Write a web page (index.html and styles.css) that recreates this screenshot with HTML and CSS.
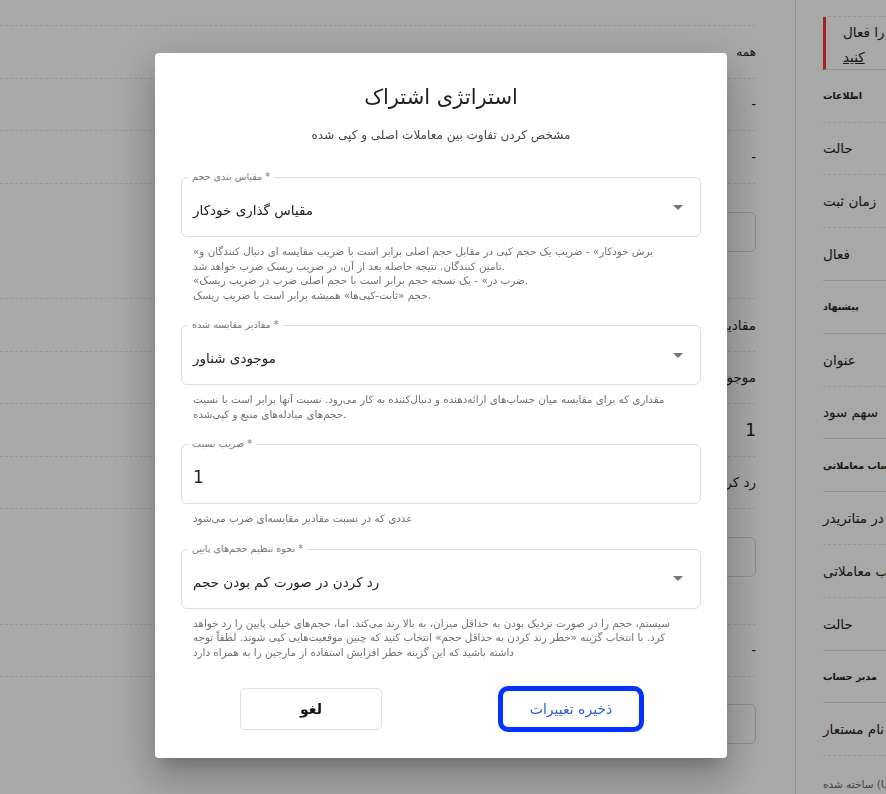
FILE: index.html
```html
<!DOCTYPE html>
<html lang="fa">
<head>
<meta charset="utf-8">
<title>استراتژی اشتراک</title>
<link rel="stylesheet" href="styles.css">
</head>
<body>
<div class="page">
  <main class="content">
    <div class="row row-top"></div>
    <div class="row"><span class="cell small">همه</span></div>
    <div class="row"><span class="cell">-</span></div>
    <div class="row"><span class="cell">-</span></div>
    <div class="row row-tall"><div class="bg-input"></div></div>
    <div class="row"><span class="cell">مقادیر مقایسه شده</span></div>
    <div class="row"><span class="cell">موجودی شناور</span></div>
    <div class="row"><span class="cell num">1</span></div>
    <div class="row"><span class="cell">رد کردن در صورت کم بودن حجم</span></div>
    <div class="row row-tall"><div class="bg-input"></div></div>
    <div class="row"><span class="cell">-</span></div>
    <div class="row row-last"><div class="bg-input"></div></div>
  </main>
  <div class="spacer"></div>
  <aside class="sidebar">
    <div class="side-top"></div>
    <div class="side-item active solid">
      <span class="line">لطفا حساب خود را فعال</span>
      <span class="line link">کنید</span>
    </div>
    <div class="side-item head">اطلاعات</div>
    <div class="side-item">حالت</div>
    <div class="side-item">زمان ثبت</div>
    <div class="side-item solid">فعال</div>
    <div class="side-item head solid">پیشنهاد</div>
    <div class="side-item">عنوان</div>
    <div class="side-item solid">سهم سود</div>
    <div class="side-item head solid">حساب معاملاتی</div>
    <div class="side-item">شماره حساب در متاتریدر</div>
    <div class="side-item">نوع حساب معاملاتی</div>
    <div class="side-item solid">حالت</div>
    <div class="side-item head solid">مدیر حساب</div>
    <div class="side-item">نام مستعار</div>
    <div class="side-foot">ساخته شده (UTC)</div>
  </aside>
</div>

<div class="backdrop"></div>

<div class="modal" role="dialog">
  <h2 class="title">استراتژی اشتراک</h2>
  <p class="subtitle">مشخص کردن تفاوت بین معاملات اصلی و کپی شده</p>

  <div class="field">
    <div class="box">
      <span class="label">مقیاس بندی حجم *</span>
      <span class="value">مقیاس گذاری خودکار</span>
      <svg class="arrow" width="10" height="5" viewBox="0 0 10 5"><polygon points="0,0 10,0 5,5"/></svg>
    </div>
    <div class="helper">
      <div>«برش خودکار» - ضریب یک حجم کپی در مقابل حجم اصلی برابر است با ضریب مقایسه ای دنبال کنندگان و</div>
      <div>تامین کنندگان. نتیجه حاصله بعد از آن، در ضریب ریسک ضرب خواهد شد.</div>
      <div>«ضرب در» - یک نسخه حجم برابر است با حجم اصلی ضرب در ضریب ریسک.</div>
      <div>حجم «ثابت-کپی‌ها» همیشه برابر است با ضریب ریسک.</div>
    </div>
  </div>

  <div class="field">
    <div class="box">
      <span class="label">مقادیر مقایسه شده *</span>
      <span class="value">موجودی شناور</span>
      <svg class="arrow" width="10" height="5" viewBox="0 0 10 5"><polygon points="0,0 10,0 5,5"/></svg>
    </div>
    <div class="helper">
      <div>مقداری که برای مقایسه میان حساب‌های ارائه‌دهنده و دنبال‌کننده به کار می‌رود. نسبت آنها برابر است با نسبت</div>
      <div>حجم‌های مبادله‌های منبع و کپی‌شده.</div>
    </div>
  </div>

  <div class="field">
    <div class="box">
      <span class="label">ضریب نسبت *</span>
      <span class="value num">1</span>
    </div>
    <div class="helper">
      <div>عددی که در نسبت مقادیر مقایسه‌ای ضرب می‌شود</div>
    </div>
  </div>

  <div class="field">
    <div class="box">
      <span class="label">نحوه تنظیم حجم‌های پایین *</span>
      <span class="value">رد کردن در صورت کم بودن حجم</span>
      <svg class="arrow" width="10" height="5" viewBox="0 0 10 5"><polygon points="0,0 10,0 5,5"/></svg>
    </div>
    <div class="helper">
      <div>سیستم، حجم را در صورت نزدیک بودن به حداقل میزان، به بالا رند می‌کند. اما، حجم‌های خیلی پایین را رد خواهد</div>
      <div>کرد. با انتخاب گزینه «خطر رند کردن به حداقل حجم» انتخاب کنید که چنین موقعیت‌هایی کپی شوند. لطفاً توجه</div>
      <div>داشته باشید که این گزینه خطر افزایش استفاده از مارجین را به همراه دارد</div>
    </div>
  </div>

  <div class="actions">
    <button class="btn cancel" type="button">لغو</button>
    <button class="btn save" type="button">ذخیره تغییرات</button>
  </div>
</div>
</body>
</html>
```

FILE: styles.css
```css
* { box-sizing: border-box; }
html, body { margin: 0; padding: 0; }
body {
  width: 886px;
  height: 794px;
  overflow: hidden;
  background: #fff;
  color: #222;
  font-family: "DejaVu Sans", sans-serif;
}

/* ---------- background page ---------- */
.page {
  display: flex;
  height: 794px;
}
.content {
  width: 756px;
  flex: none;
}
.row {
  height: 52.5px;
  border-bottom: 1px dashed #e2e2e2;
  display: flex;
  align-items: center;
  justify-content: flex-end;
  overflow: hidden;
}
.row-top { height: 26px; }
.row-tall {
  height: 115.5px;
  align-items: flex-start;
  padding-top: 28px;
}
.row-last {
  height: auto;
  border-bottom: none;
  align-items: flex-start;
  padding-top: 27px;
}
.cell {
  font-size: 13.5px;
  white-space: nowrap;
  color: #222;
}
.cell.small { font-size: 12px; }
.cell.num { font-size: 17px; }
.bg-input {
  width: 320px;
  height: 40px;
  border: 1px solid #d6d6d6;
  border-radius: 6px;
}
.spacer {
  width: 39px;
  flex: none;
}
.sidebar {
  flex: 1;
  min-width: 0;
  border-left: 1px solid #dcdcdc;
  padding-left: 27px;
  overflow: hidden;
}
.side-top {
  height: 17px;
  border-bottom: 1px dashed #e2e2e2;
  width: 200px;
}
.side-item {
  width: 200px;
  height: 52.8px;
  border-bottom: 1px dashed #e2e2e2;
  display: flex;
  align-items: center;
  font-size: 13.5px;
  white-space: nowrap;
  color: #222;
}
.side-item.solid { border-bottom-style: solid; border-bottom-color: #dcdcdc; }
.side-item.head { font-size: 9.5px; font-weight: bold; }
.side-item.active {
  flex-direction: column;
  align-items: flex-start;
  justify-content: center;
  gap: 9px;
  padding-top: 4px;
  border-left: 3px solid #ff3434;
  padding-left: 17px;
}
.side-item.active .line { display: block; }
.link { text-decoration: underline; }
.side-foot {
  padding-top: 22px;
  font-size: 10.5px;
  color: #666;
  white-space: nowrap;
}

/* ---------- overlay ---------- */
.backdrop {
  position: fixed;
  inset: 0;
  background: rgba(0, 0, 0, 0.34);
}

/* ---------- modal ---------- */
.modal {
  position: fixed;
  left: 155px;
  top: 53px;
  width: 572px;
  background: #fff;
  border-radius: 4px;
  padding: 29px 26px 28px 26px;
  box-shadow: 0 11px 15px -7px rgba(0,0,0,.2), 0 24px 38px 3px rgba(0,0,0,.14), 0 9px 46px 8px rgba(0,0,0,.12);
}
.title {
  margin: 0;
  font-size: 21px;
  font-weight: normal;
  line-height: 30px;
  text-align: center;
  color: #222;
}
.subtitle {
  margin: 14px 0 0;
  font-size: 12px;
  line-height: 18px;
  text-align: center;
  color: #444;
}
.field { margin-top: 23px; }
.subtitle + .field { margin-top: 33px; }
.box {
  position: relative;
  height: 60px;
  border: 1px solid #dedede;
  border-radius: 6px;
  display: flex;
  align-items: center;
  padding: 0 17px 0 11px;
}
.label {
  position: absolute;
  left: 6px;
  top: -7px;
  padding: 0 4px;
  background: #fff;
  font-size: 9.6px;
  line-height: 12px;
  color: #777;
  white-space: nowrap;
}
.value {
  margin-top: 6px;
  font-size: 13.5px;
  color: #222;
  white-space: nowrap;
}
.value.num { font-size: 17px; }
.arrow {
  margin-left: auto;
  fill: #757575;
}
.helper {
  margin-top: 7px;
  padding: 0 12px;
  font-size: 10.35px;
  line-height: 14.5px;
  color: #707070;
}
.helper div { white-space: nowrap; }
.actions {
  margin-top: 29px;
  display: flex;
  justify-content: space-around;
}
.btn {
  width: 142px;
  height: 42px;
  border: 1px solid #e0e0e0;
  border-radius: 5px;
  background: #fff;
  font-family: "DejaVu Sans", sans-serif;
  font-size: 14px;
  cursor: pointer;
}
.cancel { font-weight: bold; color: #111; }
.save {
  color: #2c5ed8;
  outline: 5px solid #0433ff;
  outline-offset: -3px;
  border-radius: 8px;
}
```
